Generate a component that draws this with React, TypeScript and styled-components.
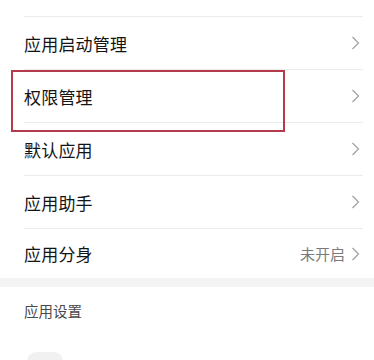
import * as React from 'react';
import styled, { createGlobalStyle } from 'styled-components';

const GlobalStyle = createGlobalStyle`
	html, body {
		margin: 0;
		padding: 0;
		background: #ffffff;
		font-family: 'Noto Sans CJK SC', 'Noto Sans', sans-serif;
		overflow: hidden;
	}
`;

interface Item {
	label: string;
	value?: string;
	highlight?: boolean;
	last?: boolean;
}

const items: Item[] = [
	{ label: '应用管理' },
	{ label: '应用启动管理' },
	{ label: '权限管理', highlight: true },
	{ label: '默认应用' },
	{ label: '应用助手' },
	{ label: '应用分身', value: '未开启', last: true },
];

const Chevron = () => (
	<svg width="9" height="14" viewBox="0 0 9 14">
		<path d="M1.5 1 L7.5 7 L1.5 13" fill="none" stroke="#a0a0a0" strokeWidth="1.2" />
	</svg>
);

const App = () => {
	return (
		<Root>
			<GlobalStyle />
			<List>
				{items.map(item => (
					<Row key={item.label} last={item.last}>
						<Label>{item.label}</Label>
						<Right>
							{item.value && <Value>{item.value}</Value>}
							<Chevron />
						</Right>
						{item.highlight && <Highlight />}
					</Row>
				))}
			</List>
			<Band />
			<SectionTitle>应用设置</SectionTitle>
			<AppRow>
				<AppIcon />
			</AppRow>
		</Root>
	);
};

export default App;

const Root = styled.div`
	width: 374px;
	height: 360px;
	overflow: hidden;
	background: #ffffff;
`;

const List = styled.div`
	margin-top: -36px;
	display: flex;
	flex-direction: column;
`;

const Row = styled.div<{ last?: boolean }>`
	position: relative;
	display: flex;
	align-items: center;
	justify-content: space-between;
	height: ${p => (p.last ? '49px' : '52px')};
	margin: 0 11px 0 24px;
	padding-right: 3px;
	border-bottom: ${p => (p.last ? 'none' : '1px solid #ebebeb')};
`;

const Label = styled.span`
	font-size: 17px;
	color: #141414;
	letter-spacing: 0.2px;
`;

const Right = styled.div`
	display: flex;
	align-items: center;
	gap: 6px;
`;

const Value = styled.span`
	font-size: 15px;
	color: #7a7a7a;
`;

const Highlight = styled.div`
	position: absolute;
	box-sizing: border-box;
	left: -13px;
	top: 0;
	width: 274px;
	height: 62px;
	border: 2px solid #b23c4c;
	pointer-events: none;
`;

const Band = styled.div`
	height: 9px;
	background: #f3f3f3;
`;

const SectionTitle = styled.div`
	display: flex;
	align-items: center;
	height: 46px;
	padding-left: 24px;
	font-size: 14.5px;
	color: #4a4a4a;
`;

const AppRow = styled.div`
	display: flex;
	padding: 19px 0 0 27px;
`;

const AppIcon = styled.div`
	width: 36px;
	height: 36px;
	border-radius: 9px;
	background: #f1f1f1;
`;
